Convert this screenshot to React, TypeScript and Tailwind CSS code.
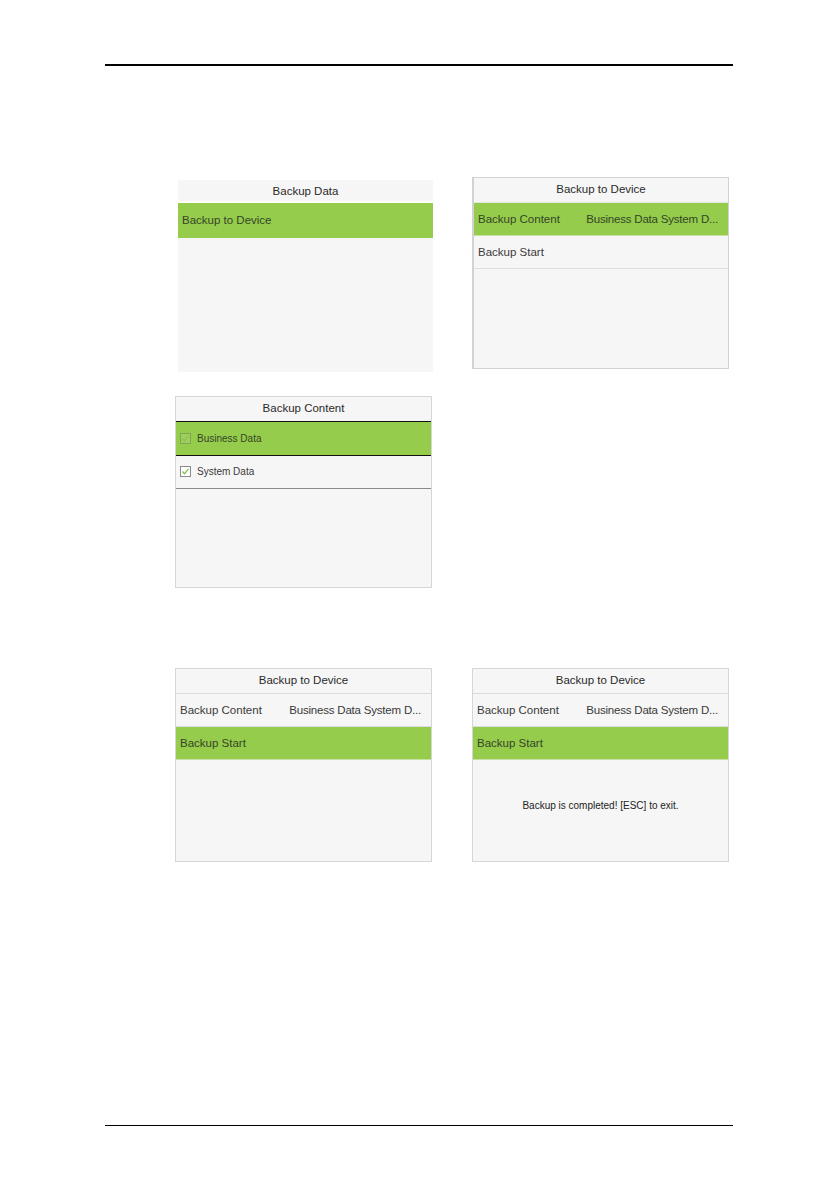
import type { ReactNode } from "react";

const font = { fontFamily: '"Liberation Sans", Arial, sans-serif' };

function Title({ children, line = "border-[#dcdcdc]" }: { children: ReactNode; line?: string }) {
  return (
    <div className={`flex h-[25px] items-center justify-center border-b pt-[1px] text-[11.5px] text-[#2a2a2a] ${line}`}>
      {children}
    </div>
  );
}

function Row({ label, value, active }: { label: string; value?: string; active?: boolean }) {
  return (
    <div
      className={`flex h-[33px] items-center justify-between border-b px-[4px] pt-[2px] text-[11.5px] ${
        active ? "border-[#c8e0a8] bg-[#96cc4b] text-[#34452a]" : "border-[#dedede] text-[#3a3a3a]"
      }`}
    >
      <span>{label}</span>
      {value && <span className="pr-[6px] tracking-[-0.2px]">{value}</span>}
    </div>
  );
}

function Check({ faint }: { faint?: boolean }) {
  return (
    <svg width="11" height="11" viewBox="0 0 11 11" className="shrink-0">
      <rect x="0.5" y="0.5" width="10" height="10" fill={faint ? "#9fcf5c" : "#fff"} stroke={faint ? "#7fa35a" : "#8a8a8a"} />
      <path d="M2.5 5.5 L4.5 7.8 L8.5 2.8" fill="none" stroke={faint ? "#8cc050" : "#7cc243"} strokeWidth="1.3" />
    </svg>
  );
}

function Panel({ children, className = "" }: { children: ReactNode; className?: string }) {
  return <div className={`flex flex-col bg-[#f6f6f6] ${className}`}>{children}</div>;
}

export default function App() {
  return (
    <div className="flex h-[1190px] w-[839px] flex-col bg-white" style={font}>
      <div className="ml-[105px] mt-[64px] h-[1.5px] w-[628px] bg-black" />

      <div className="ml-[178px] mt-[111px] flex items-start gap-[39px]">
        <Panel className="mt-[3px] h-[192px] w-[255px]">
          <div className="flex h-[23px] items-center justify-center border-b-2 border-white pt-[4px] text-[11.5px] text-[#2a2a2a]">
            Backup Data
          </div>
          <div className="flex h-[35px] items-center bg-[#96cc4b] px-[4px] pt-[2px] text-[11.5px] text-[#34452a]">
            Backup to Device
          </div>
        </Panel>
        <Panel className="h-[192px] w-[257px] border border-l-2 border-[#d2d2d2]">
          <Title line="border-[#e4e4e4]">Backup to Device</Title>
          <Row label="Backup Content" value="Business Data System D..." active />
          <Row label="Backup Start" />
        </Panel>
      </div>

      <div className="ml-[175px] mt-[24px] flex">
        <Panel className="h-[192px] w-[257px] border border-[#d6d6d6]">
          <div className="flex h-[24px] items-center justify-center pt-[1px] text-[11.5px] text-[#2a2a2a]">Backup Content</div>
          <div className="flex h-[35px] items-center gap-[6px] border-y-[1.5px] border-[#111] bg-[#96cc4b] px-[4px] text-[10px] text-[#34452a]">
            <Check faint />
            Business Data
          </div>
          <div className="flex h-[33px] items-center gap-[6px] border-b border-[#8a8a8a] px-[4px] text-[10px] text-[#3a3a3a]">
            <Check />
            System Data
          </div>
        </Panel>
      </div>

      <div className="ml-[175px] mt-[80px] flex gap-[40px]">
        <Panel className="h-[194px] w-[257px] border border-[#d6d6d6]">
          <Title>Backup to Device</Title>
          <Row label="Backup Content" value="Business Data System D..." />
          <Row label="Backup Start" active />
        </Panel>
        <Panel className="h-[194px] w-[257px] border border-[#d6d6d6]">
          <Title>Backup to Device</Title>
          <Row label="Backup Content" value="Business Data System D..." />
          <Row label="Backup Start" active />
          <div className="flex flex-1 items-center justify-center pb-[10px] text-[10px] text-[#222]">
            Backup is completed! [ESC] to exit.
          </div>
        </Panel>
      </div>

      <div className="ml-[105px] mt-auto mb-[64px] h-[1.5px] w-[628px] bg-black" />
    </div>
  );
}
